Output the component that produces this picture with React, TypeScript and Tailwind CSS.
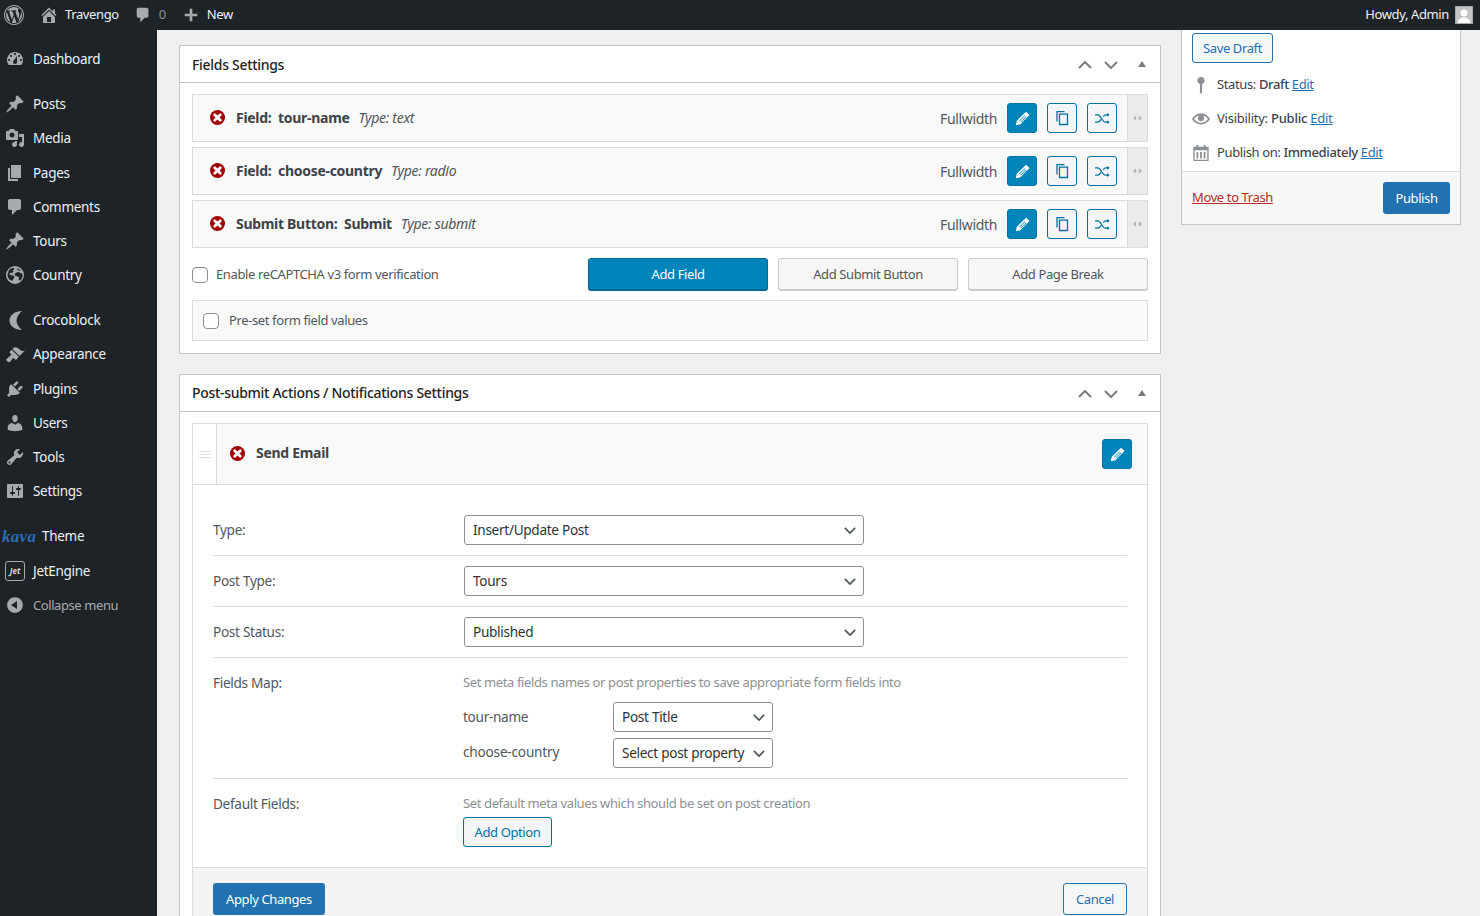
import React from "react";

const D: Record<string, string> = {
  wp: "M20 10c0-5.52-4.48-10-10-10S0 4.48 0 10s4.48 10 10 10 10-4.48 10-10zM10 1.01c4.96 0 8.99 4.02 8.99 8.99s-4.03 8.99-8.99 8.99S1.01 14.96 1.01 10 5.04 1.01 10 1.01zM8.01 14.82L4.96 6.61c.49-.03 1.05-.08 1.05-.08.43-.05.38-1.01-.06-.99 0 0-1.29.1-2.13.1-.15 0-.33 0-.52-.01 1.44-2.17 3.9-3.6 6.7-3.6 2.09 0 3.99.79 5.41 2.09-.6-.08-1.45.35-1.45 1.42 0 .66.38 1.22.79 1.88.31.54.5 1.22.5 2.21 0 1.34-1.27 4.48-1.27 4.48l-2.71-7.5c.48-.03.75-.16.75-.16.43-.05.38-1.1-.05-1.08 0 0-1.3.11-2.14.11-.78 0-2.11-.11-2.11-.11-.43-.02-.48 1.06-.05 1.08l.84.08 1.12 3.04zm6.02 2.15L16.64 10s.67-1.69.39-3.81c.63 1.14.94 2.42.94 3.81 0 2.96-1.56 5.58-3.94 6.97zM2.68 6.77L6.5 17.25c-2.67-1.3-4.47-4.08-4.47-7.25 0-1.16.2-2.23.65-3.23zm7.45 4.53l2.29 6.25c.02.04.04.07.07.1-.77.27-1.6.42-2.46.42-.72 0-1.41-.1-2.07-.3z",
  home: "M16 8.5l1.53 1.53-1.06 1.06L10 4.62l-6.47 6.47-1.06-1.06L10 2.5l4 4v-2h2v4zm-6-2.46l6 5.99V18H4v-5.97zM12 17v-5H8v5h4z",
  plus: "M17 8.5v3h-5.5V17h-3v-5.5H3v-3h5.5V3h3v5.5H17z",
  dash: "M3.76 16h12.48c1.1-1.37 1.76-3.11 1.76-5 0-4.42-3.58-8-8-8s-8 3.58-8 8c0 1.89.66 3.63 1.76 5zM10 4c.55 0 1 .45 1 1s-.45 1-1 1-1-.45-1-1 .45-1 1-1zM6 6c.55 0 1 .45 1 1s-.45 1-1 1-1-.45-1-1 .45-1 1-1zm8 0c.55 0 1 .45 1 1s-.45 1-1 1-1-.45-1-1 .45-1 1-1zm-5.37 5.55L12 7v6c0 1.1-.9 2-2 2s-2-.9-2-2c0-.57.24-1.08.63-1.45zM4 10c.55 0 1 .45 1 1s-.45 1-1 1-1-.45-1-1 .45-1 1-1zm12 0c.55 0 1 .45 1 1s-.45 1-1 1-1-.45-1-1 .45-1 1-1z",
  pin: "M10.44 3.02l1.82-1.82 6.36 6.35-1.83 1.82c-1.05-.68-2.48-.57-3.41.36l-.75.75c-.92.93-1.04 2.35-.35 3.41l-1.83 1.82-2.41-2.41-2.8 2.79c-.42.42-3.38 2.71-3.8 2.29s1.86-3.39 2.28-3.81l2.79-2.79L4.1 9.36l1.83-1.82c1.05.69 2.48.57 3.4-.36l.75-.75c.93-.92 1.05-2.35.36-3.41z",
  media: "M13 11V4c0-.55-.45-1-1-1h-1.67L9 1H5L3.67 3H2c-.55 0-1 .45-1 1v7c0 .55.45 1 1 1h10c.55 0 1-.45 1-1zM7 4.5c1.38 0 2.5 1.12 2.5 2.5S8.38 9.5 7 9.5 4.5 8.38 4.5 7 5.62 4.5 7 4.5zM14 6h5v10.5c0 1.38-1.12 2.5-2.5 2.5S14 17.88 14 16.5s1.12-2.5 2.5-2.5c.17 0 .34.02.5.05V9h-3V6zm-4 8.05V13h2v3.5c0 1.38-1.12 2.5-2.5 2.5S7 17.88 7 16.5 8.12 14 9.5 14c.17 0 .34.02.5.05z",
  page: "M6 15V2h10v13H6zm-1 1h8v2H3V5h2v11z",
  comment: "M5 2h9c1.1 0 2 .9 2 2v7c0 1.1-.9 2-2 2h-2l-5 5v-5H5c-1.1 0-2-.9-2-2V4c0-1.1.9-2 2-2z",
  globe: "M10 1a9 9 0 1 0 0 18 9 9 0 0 0 0-18zM4 5.2c1.2-1.3 2.7-2.2 4.4-2.5l1 1.3-1.6 1.5.9 1.4-2.2 1.2-1.6-.4-.5 1.5 1.8 1.1 2.2.1 1 1.6-1.2 2.3-.9 1.4C5.400 15.800 3.900 14 3 12.200L2.500 9.500 4 5.200zM12 3.200c1.500.5 2.900 1.500 3.800 2.800l-1.800-.2-1.500-1.100zM17.300 8.500l.3 2c-.1 2.100-1.100 4-2.600 5.300l-1.300-1 .3-2.300-1.800-1.300-1.900-.3-.6-2 1.600-1.400 2.700-.4 1.500 1.100z",
  croco: "M17 1C10 1 4.500 5 4.500 10.500C4.500 16 10 20 17 20C14 17.500 11.500 14.500 11.500 10.500C11.500 7 14 3.500 17 1z",
  brush: "M14.480 11.060L7.410 3.990l1.500-1.500c.5-.56 2.300-.47 3.510.32 1.210.8 1.430 1.280 2.910 2.100 1.180.64 2.450 1.260 4.450.85zm-.71.71L6.700 4.700 4.930 6.470c-.39.39-.39 1.020 0 1.410l1.060 1.060c.39.39.39 1.030 0 1.420-.6.6-1.430 1.110-2.210 1.690-.35.26-.7.53-1.010.84C1.430 13.230 1 14.870 1.500 15.500c.5.63 2.270 2.500 3.610 1.160.31-.31.58-.66.84-1.010.58-.78 1.090-1.610 1.690-2.210.39-.39 1.030-.39 1.420 0l1.060 1.060c.39.39 1.020.39 1.410 0z",
  plug: "M13.110 4.360L9.870 7.600 8 5.730l3.240-3.240c.35-.34 1.050-.2 1.560.32.52.51.66 1.210.31 1.550zm-8 1.770l.91-1.120 9.010 9.010-1.190.84c-.71.71-2.630 1.160-3.820 1.160H6.140L4.900 17.260c-.59.59-1.540.59-2.120 0-.59-.58-.59-1.530 0-2.120l1.240-1.240v-3.880c0-1.130.4-3.190 1.090-3.890zm7.260 3.970l3.240-3.240c.34-.35 1.040-.21 1.550.31.52.51.66 1.210.31 1.550l-3.240 3.250z",
  user: "M10 9.250c-2.270 0-2.730-3.440-2.730-3.440C7 4.020 7.820 2 9.970 2c2.160 0 2.980 2.020 2.710 3.810 0 0-.41 3.440-2.680 3.440zm0 2.570L12.720 10c2.390 0 4.520 2.330 4.520 4.530v2.490s-3.650 1.130-7.240 1.130c-3.650 0-7.240-1.130-7.240-1.130v-2.490c0-2.250 1.940-4.480 4.470-4.480z",
  tool: "M16.680 9.770c-1.340 1.340-3.300 1.670-4.950.99l-5.410 6.520c-.99.99-2.590.99-3.580 0s-.99-2.590 0-3.570l6.520-5.420c-.68-1.650-.35-3.610.99-4.950 1.280-1.280 3.120-1.620 4.720-1.060l-2.890 2.890 2.820 2.820 2.860-2.870c.53 1.580.18 3.390-1.080 4.650zM3.810 16.210c.4.39 1.040.39 1.430 0 .4-.4.4-1.040 0-1.430-.39-.4-1.030-.4-1.430 0-.39.39-.39 1.030 0 1.430z",
  settings: "M18 16V4c0-.55-.45-1-1-1H3c-.55 0-1 .45-1 1v12c0 .55.45 1 1 1h14c.55 0 1-.45 1-1zM8 11h1c.55 0 1 .45 1 1s-.45 1-1 1H8v1.500c0 .28-.22.5-.5.5s-.5-.22-.5-.5V13H6c-.55 0-1-.45-1-1s.45-1 1-1h1V5.500c0-.28.22-.5.5-.5s.5.22.5.5V11zm5-2h-1c-.55 0-1-.45-1-1s.45-1 1-1h1V5.500c0-.28.22-.5.5-.5s.5.22.5.5V7h1c.55 0 1 .45 1 1s-.45 1-1 1h-1v5.500c0 .28-.22.5-.5.5s-.5-.22-.5-.5V9z",
  collapse: "M10 2.160c4.330 0 7.840 3.510 7.840 7.840s-3.510 7.840-7.840 7.840S2.160 14.330 2.160 10 5.670 2.160 10 2.160zm2 11.840V6l-6 4z",
  eye: "M19.700 9.400C17.700 6 14 3.900 10 3.900S2.300 6 .3 9.400L0 10l.3.6c2 3.400 5.700 5.500 9.700 5.500s7.700-2.100 9.700-5.500l.3-.6-.3-.6zM10 14.100c-3.100 0-6-1.600-7.700-4.100C3.600 8 5.700 6.600 8 6.100c-.9.6-1.500 1.700-1.500 2.900 0 1.900 1.600 3.500 3.500 3.500s3.500-1.600 3.500-3.500c0-1.200-.6-2.300-1.500-2.900 2.300.5 4.400 1.900 5.700 3.900-1.700 2.500-4.600 4.100-7.700 4.100z",
  key: "M10 1a4 4 0 0 1 1.200 7.800V18.500l-1.200 1.200-1.200-1.200V8.800A4 4 0 0 1 10 1z",
  calendar: "M5 .8h2V3h6V.8h2V3h3.500v16h-17V3H5V.8zM3 7v10.500h14V7H3zM5 9h2v7H5V9zm4 0h2v7H9V9zm4 0h2v7h-2V9z",
  pencil: "M14.200 2l4 4L7.500 16.700 2 18l1.300-5.500L14.200 2zM12.600 6.200l-6.500 6.500.6.600 6.500-6.500-.6-.6zm1.400 1.400l-6.500 6.500.6.600 6.500-6.500-.6-.6z",
};

const Icon = ({ n, className }: { n: string; className?: string }) => (
  <svg viewBox="0 0 20 20" fill="currentColor" fillRule="evenodd" className={className}>
    <path d={D[n]} />
  </svg>
);

const Chevron = ({ dir, className }: { dir: "up" | "down"; className?: string }) => (
  <svg viewBox="0 0 14 8" fill="none" stroke="currentColor" strokeWidth="2" className={className}>
    <path d={dir === "up" ? "M1 7l6-6 6 6" : "M1 1l6 6 6-6"} />
  </svg>
);

const RedX = () => (
  <svg viewBox="0 0 16 16" className="w-[15px] h-[15px] shrink-0 -mt-[2px]">
    <circle cx="8" cy="8" r="8" fill="#a00000" />
    <path d="M5 5l6 6M11 5l-6 6" stroke="#fff" strokeWidth="3" strokeLinecap="round" />
  </svg>
);

const EditBtn = () => (
  <div className="w-[30px] h-[30px] rounded-[3px] bg-[#0085ba] border border-[#0073aa] flex items-center justify-center text-white">
    <Icon n="pencil" className="w-[17px] h-[17px]" />
  </div>
);

const OutlineBtn = ({ children }: { children: React.ReactNode }) => (
  <div className="w-[30px] h-[30px] rounded-[3px] bg-[#f3f5f6] border border-[#0071a1] flex items-center justify-center text-[#0071a1]">
    {children}
  </div>
);

const Copy = () => (
  <svg viewBox="0 0 16 16" fill="none" stroke="currentColor" strokeWidth="1.300" className="w-[16px] h-[16px]">
    <path d="M5.500 4.200V14.500H13.500V4.200H5.500z" />
    <path d="M3 11.500V1.700H10.500" />
  </svg>
);

const Shuffle = () => (
  <svg viewBox="0 0 18 14" fill="none" stroke="currentColor" strokeWidth="1.400" className="w-[17px] h-[13px]">
    <path d="M1 3h3c3 0 5 8 8 8h4M1 11h3c1.500 0 2.500-1.500 3.500-3M10 5c.7-1 1.200-2 2-2h4" />
    <path d="M14 1l2.500 2L14 5zM14 9l2.500 2L14 13z" fill="currentColor" stroke="none" />
  </svg>
);

const FieldRow = ({ label, name, type }: { label: string; name: string; type: string }) => (
  <div className="flex h-[48px] border border-[#dcdcde] bg-[#f9f9f9]">
    <div className="flex-1 flex items-center pl-[17px] pr-[10px]">
      <RedX />
      <div className="ml-[11px] font-bold text-[14px] text-[#3c434a] whitespace-pre -mt-px tracking-[-0.3px]">{label}:  {name}</div>
      <div className="ml-[9px] italic text-[14px] text-[#50575e] -mt-px tracking-[-0.3px]">Type: {type}</div>
      <div className="ml-auto text-[14px] text-[#50575e] mt-px tracking-[-0.35px]">Fullwidth</div>
      <div className="ml-[10px] flex gap-[10px]">
        <EditBtn />
        <OutlineBtn><Copy /></OutlineBtn>
        <OutlineBtn><Shuffle /></OutlineBtn>
      </div>
    </div>
    <div className="w-[20px] bg-[#ebebeb] border-l border-[#dcdcde] flex items-center justify-center text-[#b4b4b4] text-[8px]">
      <svg viewBox="0 0 10 6" fill="currentColor" className="w-[9px] h-[6px]"><path d="M0 3l3.500-3v6zM10 3L6.500 0v6z" /></svg>
    </div>
  </div>
);

const Box = ({ title, children, up }: { title: string; children: React.ReactNode; up?: boolean }) => (
  <div className="border border-[#c3c4c7] bg-white">
    <div className="h-[37px] border-b border-[#c3c4c7] flex items-center pl-[12px] pr-[14px] text-[#1d2327]">
      <div className={`text-[14px] font-medium tracking-[-0.3px] ${up ? "-mt-[2px]" : ""}`}>{title}</div>
      <div className="ml-auto flex items-center text-[#787c82] mt-[1px]">
        <Chevron dir="up" className="w-[14px] h-[8px]" />
        <Chevron dir="down" className="ml-[12px] w-[14px] h-[8px]" />
        <svg viewBox="0 0 8 6" fill="currentColor" className="ml-[20px] w-[8px] h-[6px] -mt-[1px]"><path d="M4 0l4 6H0z" /></svg>
      </div>
    </div>
    {children}
  </div>
);

const Select = ({ value, className }: { value: string; className: string }) => (
  <div className={`h-[30px] border border-[#8c8f94] rounded-[3px] bg-white flex items-center pl-[8px] pr-[7px] text-[13.6px] text-[#2c3338] tracking-[-0.3px] ${className}`}>
    <span className="whitespace-nowrap">{value}</span>
    <Chevron dir="down" className="ml-auto w-[12px] h-[7px] text-[#50575e] shrink-0" />
  </div>
);

const ActionRow = ({ label, value }: { label: string; value: string }) => (
  <div className="flex items-center border-b border-[#dcdcde] pb-[10px] mb-[10px]">
    <div className="w-[251px] text-[13.6px] text-[#50575e] tracking-[-0.3px]">{label}</div>
    <Select value={value} className="w-[400px]" />
  </div>
);

const menu1 = [
  ["pin", "Posts"],
  ["media", "Media"],
  ["page", "Pages"],
  ["comment", "Comments"],
  ["pin", "Tours"],
  ["globe", "Country"],
];
const menu2 = [
  ["croco", "Crocoblock"],
  ["brush", "Appearance"],
  ["plug", "Plugins"],
  ["user", "Users"],
  ["tool", "Tools"],
  ["settings", "Settings"],
];

const MenuItem = ({ n, label, last }: { n: string; label: string; last?: boolean }) => (
  <div className={`h-[34.2px] flex items-center pl-[5px] ${last ? "mb-[11px]" : ""}`}>
    <Icon n={n} className="w-[20px] h-[20px] text-[#a7aaad] shrink-0" />
    <span className="ml-[8px] text-[13.5px] text-[#f0f0f1] tracking-[-0.3px]">{label}</span>
  </div>
);

export default function App() {
  return (
    <div className="h-[916px] w-[1480px] overflow-hidden bg-[#f0f0f1] [font-family:'Noto_Sans',sans-serif] tracking-[-0.38px] flex flex-col">
      <div className="h-[30px] shrink-0 bg-[#1d2327] flex items-center text-[13px] text-[#f0f0f1]">
        <Icon n="wp" className="ml-[4px] w-[20px] h-[20px] text-[#a7aaad]" />
        <Icon n="home" className="ml-[15px] w-[20px] h-[20px] text-[#a7aaad]" />
        <span className="ml-[6px]">Travengo</span>
        <Icon n="comment" className="ml-[15px] w-[18px] h-[20px] text-[#a7aaad]" />
        <span className="ml-[7px] text-[#8c8f94]">0</span>
        <Icon n="plus" className="ml-[16px] w-[18px] h-[18px] text-[#a7aaad]" />
        <span className="ml-[7px]">New</span>
        <span className="ml-auto">Howdy, Admin</span>
        <div className="ml-[6px] mr-[7px] w-[18px] h-[18px] bg-[#c3c4c7] border border-[#a7aaad] flex items-end justify-center overflow-hidden">
          <svg viewBox="0 0 16 16" fill="#fff" className="w-[16px] h-[16px]"><circle cx="8" cy="6" r="3.500" /><path d="M2 16c0-4 3-5.500 6-5.500s6 1.500 6 5.500z" /></svg>
        </div>
      </div>
      <div className="flex-1 flex min-h-0">
        <div className="w-[157px] shrink-0 bg-[#1d2327] pt-[12px]">
          <MenuItem n="dash" label="Dashboard" last />
          {menu1.map(([n, l], i) => <MenuItem key={l} n={n} label={l} last={i === menu1.length - 1} />)}
          {menu2.map(([n, l], i) => <MenuItem key={l} n={n} label={l} last={i === menu2.length - 1} />)}
          <div className="h-[34.2px] flex items-center pl-[2px]">
            <span className="w-[34px] [font-family:'Liberation_Serif',serif] italic font-bold text-[17px] text-[#2f6bb3] tracking-[0.3px] leading-none">kava</span>
            <span className="ml-[6px] text-[13.5px] text-[#f0f0f1] tracking-[-0.3px]">Theme</span>
          </div>
          <div className="h-[34.2px] flex items-center pl-[5px]">
            <div className="w-[20px] h-[20px] border border-[#a7aaad] rounded-[3px] flex items-center justify-center text-[8px] font-bold text-[#dcdcde] italic leading-none tracking-normal">Jet</div>
            <span className="ml-[8px] text-[13.5px] text-[#f0f0f1] tracking-[-0.3px]">JetEngine</span>
          </div>
          <div className="h-[34.2px] flex items-center pl-[5px]">
            <Icon n="collapse" className="w-[20px] h-[20px] text-[#a7aaad]" />
            <span className="ml-[8px] text-[13px] text-[#a7aaad] mt-[2px] tracking-[-0.42px]">Collapse menu</span>
          </div>
        </div>
        <div className="flex-1 pl-[22px] flex gap-[20px] min-w-0">
          <div className="w-[982px] pt-[15px] flex flex-col gap-[20px]">
            <Box title="Fields Settings">
              <div className="px-[12px] pt-[11px] pb-[12px]">
                <div className="flex flex-col gap-[5px]">
                  <FieldRow label="Field" name="tour-name" type="text" />
                  <FieldRow label="Field" name="choose-country" type="radio" />
                  <FieldRow label="Submit Button" name="Submit" type="submit" />
                </div>
                <div className="mt-[10px] flex items-center">
                  <input type="checkbox" className="appearance-none w-[16px] h-[16px] rounded-[4px] border border-[#8c8f94] bg-white mt-[1px]" />
                  <span className="ml-[8px] text-[13px] text-[#50575e] mt-[2px]">Enable reCAPTCHA v3 form verification</span>
                  <div className="ml-auto flex gap-[10px] text-[13px]">
                    <div className="w-[180px] h-[32px] rounded-[3px] bg-[#0085ba] border border-[#006799] shadow-[0_1px_0_#006799] text-white flex items-center justify-center pt-[1px]">Add Field</div>
                    <div className="w-[180px] h-[32px] rounded-[3px] bg-[#f7f7f7] border border-[#cccccc] shadow-[0_1px_0_#cccccc] text-[#555555] flex items-center justify-center pt-[1px]">Add Submit Button</div>
                    <div className="w-[180px] h-[32px] rounded-[3px] bg-[#f7f7f7] border border-[#cccccc] shadow-[0_1px_0_#cccccc] text-[#555555] flex items-center justify-center pt-[1px]">Add Page Break</div>
                  </div>
                </div>
                <div className="mt-[10px] h-[41px] border border-[#dcdcde] bg-[#f9f9f9] flex items-center pl-[10px]">
                  <input type="checkbox" className="appearance-none w-[16px] h-[16px] rounded-[4px] border border-[#8c8f94] bg-white" />
                  <span className="ml-[10px] text-[13px] text-[#50575e]">Pre-set form field values</span>
                </div>
              </div>
            </Box>
            <Box title="Post-submit Actions / Notifications Settings" up>
              <div className="mx-[12px] mt-[11px] border border-[#dcdcde]">
                <div className="h-[61px] flex bg-[#f9f9f9] border-b border-[#dcdcde]">
                  <div className="w-[24px] border-r border-[#dcdcde] bg-white flex items-center justify-center">
                    <div className="w-[12px] h-[7px] border-y border-[#dcdcde] flex items-center"><div className="w-full h-px bg-[#dcdcde]" /></div>
                  </div>
                  <div className="flex-1 flex items-center pl-[13px] pr-[15px]">
                    <RedX />
                    <span className="ml-[11px] font-bold text-[14px] text-[#3c434a] -mt-[3px] tracking-[-0.3px]">Send Email</span>
                    <div className="ml-auto"><EditBtn /></div>
                  </div>
                </div>
                <div className="px-[20px] pt-[30px]">
                  <ActionRow label="Type:" value="Insert/Update Post" />
                  <ActionRow label="Post Type:" value="Tours" />
                  <ActionRow label="Post Status:" value="Published" />
                  <div className="flex border-b border-[#dcdcde] pb-[10px] mb-[15px]">
                    <div className="w-[250px] text-[13.6px] text-[#50575e] mt-[5px] tracking-[-0.3px]">Fields Map:</div>
                    <div>
                      <div className="text-[13px] text-[#8c8f94] leading-[18px] mt-[5px]">Set meta fields names or post properties to save appropriate form fields into</div>
                      <div className="mt-[11px] flex items-center text-[13.6px] text-[#50575e] tracking-[-0.3px]">
                        <div className="w-[150px]">tour-name</div>
                        <Select value="Post Title" className="w-[160px]" />
                      </div>
                      <div className="mt-[6px] flex items-center text-[13.6px] text-[#50575e] tracking-[-0.2px]">
                        <div className="w-[150px] -mt-[2px]">choose-country</div>
                        <Select value="Select post property" className="w-[160px] tracking-[-0.2px]" />
                      </div>
                    </div>
                  </div>
                  <div className="flex pb-[20px]">
                    <div className="w-[250px] text-[13.6px] text-[#50575e] tracking-[-0.3px]">Default Fields:</div>
                    <div>
                      <div className="text-[13px] text-[#8c8f94] leading-[18px]">Set default meta values which should be set on post creation</div>
                      <div className="mt-[5px] w-[89px] h-[30px] border border-[#0071a1] rounded-[3px] bg-[#f3f5f6] text-[#0071a1] text-[13px] flex items-center justify-center pt-[1px]">Add Option</div>
                    </div>
                  </div>
                </div>
                <div className="border-t border-[#dcdcde] bg-[#f3f3f3] px-[20px] pt-[15px] pb-[20px] flex justify-between">
                  <div className="w-[112px] h-[32px] rounded-[3px] bg-[#2271b1] text-white text-[13px] flex items-center justify-center pt-[1px]">Apply Changes</div>
                  <div className="w-[64px] h-[32px] rounded-[3px] border border-[#2271b1] bg-[#f6f7f7] text-[#2271b1] text-[13px] flex items-center justify-center pt-[1px]">Cancel</div>
                </div>
              </div>
            </Box>
          </div>
          <div className="w-[280px] self-start border border-t-0 border-[#c3c4c7] bg-white text-[13px] text-[#3c434a]">
            <div className="pt-[3px] px-[10px] pb-[10px] h-[142px] border-b border-[#dcdcde]">
              <div className="w-[81px] h-[30px] border border-[#2271b1] rounded-[3px] bg-[#f6f7f7] text-[#2271b1] flex items-center justify-center pt-[1px]">Save Draft</div>
              <div className="mt-[12px] h-[20px] flex items-center">
                <Icon n="key" className="w-[18px] h-[18px] text-[#8c8f94]" />
                <span className="ml-[7px]">Status: <b className="font-medium">Draft</b> <a className="text-[#2271b1] underline">Edit</a></span>
              </div>
              <div className="mt-[14px] h-[20px] flex items-center">
                <Icon n="eye" className="w-[18px] h-[18px] text-[#8c8f94]" />
                <span className="ml-[7px] tracking-[-0.25px]">Visibility: <b className="font-medium">Public</b> <a className="text-[#2271b1] underline">Edit</a></span>
              </div>
              <div className="mt-[14px] h-[20px] flex items-center">
                <Icon n="calendar" className="w-[18px] h-[18px] text-[#8c8f94]" />
                <span className="ml-[7px]">Publish on: <b className="font-medium">Immediately</b> <a className="text-[#2271b1] underline">Edit</a></span>
              </div>
            </div>
            <div className="h-[52px] bg-[#f6f7f7] flex items-center justify-between pl-[10px] pr-[10px]">
              <a className="text-[#b32d2e] underline">Move to Trash</a>
              <div className="w-[67px] h-[32px] rounded-[3px] bg-[#2271b1] text-white flex items-center justify-center pt-[1px]">Publish</div>
            </div>
          </div>
        </div>
      </div>
    </div>
  );
}
